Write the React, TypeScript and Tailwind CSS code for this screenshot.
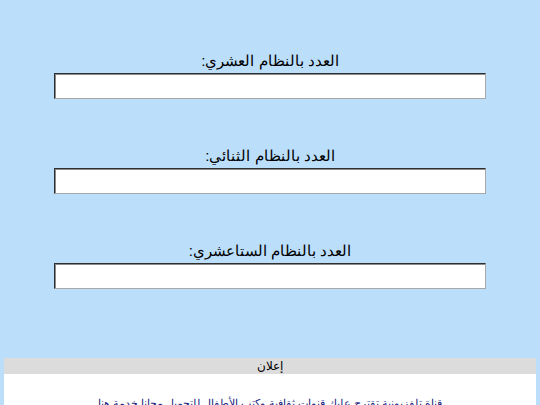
export default function App() {
  const fields = ['العدد بالنظام العشري:', 'العدد بالنظام الثنائي:', 'العدد بالنظام الستاعشري:'];

  return (
    <div
      dir="rtl"
      className="min-h-[405px] bg-[#bbdefb] text-black"
      style={{ fontFamily: '"Liberation Sans", Arial, sans-serif' }}
    >
      <div className="flex flex-col items-center pt-[51px]">
        {fields.map((label) => (
          <div key={label} className="mb-[47px] flex flex-col items-center">
            <label className="text-[15px] leading-[20px]">{label}</label>
            <input
              type="text"
              className="mt-[2px] h-[26px] w-[432px] border border-t-[#2f2f2f] border-l-[#2f2f2f] border-b-[#a8a8a8] border-r-[#a8a8a8] bg-white px-1 text-[14px] shadow-[inset_1px_1px_0_#8a8a8a] outline-none"
            />
          </div>
        ))}
      </div>

      <div className="mx-[4px] mt-[22px] bg-white">
        <div className="bg-[#dcdcdc] text-center text-[12px] leading-[16px]">إعلان</div>
        <div className="h-[60px] pt-[22px] text-center text-[11px] leading-[14px] text-[#1a237e]">
          قناة تلفزيونية تقترح عليك قنوات ثقافية وكتب الأطفال للتحميل مجانا خدمة هنا
        </div>
      </div>
    </div>
  );
}
